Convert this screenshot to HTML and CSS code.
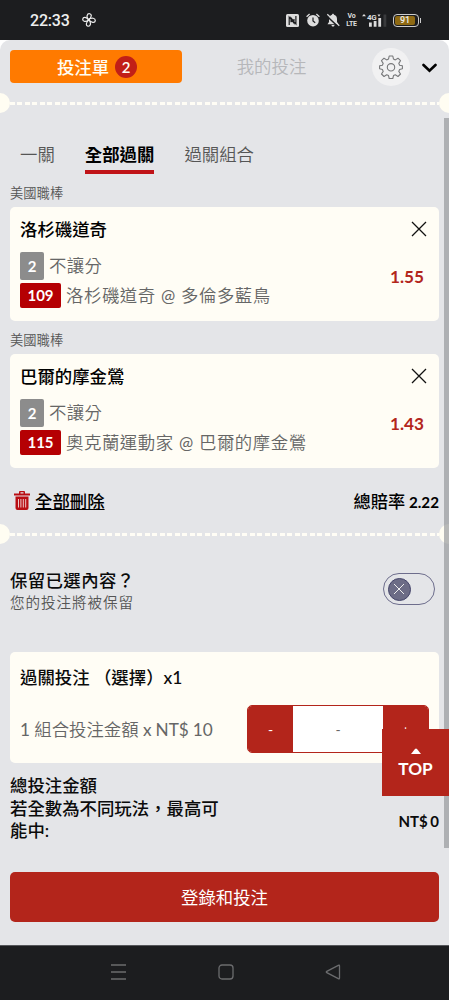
FILE: index.html
```html
<!DOCTYPE html>
<html lang="zh-Hant">
<head>
<meta charset="utf-8">
<title>投注單</title>
<link rel="stylesheet" href="styles.css">
</head>
<body>
<div class="phone">
  <header class="status">
    <span class="clock">22:33</span>
    <svg class="fan" width="14" height="14" viewBox="0 0 14 14"><g fill="none" stroke="#eee" stroke-width="1.2" transform="rotate(8 7 7)"><path d="M6.6 6.8C3.4 4.4 4.2.7 6.8.7 9.2.7 9.4 4 6.6 6.8Z"/><path d="M6.6 6.8C9 3.6 13.3 4.4 13.3 7 13.3 9.4 9.6 9.6 6.6 6.8Z"/><path d="M6.8 6.8C10 9.4 9.4 13.3 6.8 13.3 4.4 13.3 4.2 9.6 6.8 6.8Z"/><path d="M6.8 6.8C4.4 10 .7 9.4.7 7 .7 4.4 4 4.2 6.8 6.8Z"/></g></svg>
    <div class="tray">
      <svg width="13" height="13" viewBox="0 0 13 13"><rect width="13" height="13" rx="1.5" fill="#ddd"/><path d="M3.2 11V3.2L8 9V5M9.9 2v7.8L5 4v4.2" fill="none" stroke="#1c1d1f" stroke-width="1.2"/></svg>
      <svg width="14" height="14" viewBox="0 0 14 14"><circle cx="7" cy="7.7" r="5.8" fill="#ddd"/><path d="M.6 3.8 3.6 1M13.4 3.8 10.4 1" stroke="#ddd" stroke-width="1.3"/><path d="M7 4.6V8l2.2 1.7" fill="none" stroke="#1c1d1f" stroke-width="1.2"/></svg>
      <svg width="14" height="14" viewBox="0 0 14 14"><path d="M6 1.8C6 .3 8 .3 8 1.8 10.5 2.4 11 4.3 11 6v3l1.5 2.2h-11L3 9V6c0-1.700.8-3.600 3-4.200ZM5.500 12h3c0 2-3 2-3 0Z" fill="#ddd"/><path d="M.4 2.600 12 13.600" stroke="#1c1d1f" stroke-width="1.500"/><path d="M1.300 1.300 13.300 12.700" stroke="#ddd" stroke-width="1.200"/></svg>
      <span class="volte"><span>Vo</span><span>LTE</span></span>
      <svg class="signal" width="25" height="15" viewBox="0 0 25 15"><path d="M0 3.200 2 1l2 2.200ZM15.500 1.500h3L17 3.700Z" fill="#ddd"/><text x="5" y="6.800" class="net">4G</text><path d="M7 9.500h2.800v4.300H7ZM11.700 8h2.800v5.800h-2.800ZM16.300 5h2.800v8.800h-2.800Z" fill="#ddd"/><path d="M21.500 1.500h2.800v12.300h-2.800Z" fill="#393a3c"/></svg>
      <span class="battery"><span>91</span></span>
    </div>
  </header>

  <main class="sheet">
    <nav class="top">
      <div class="slip">投注單<b>2</b></div>
      <div class="mine">我的投注</div>
      <div class="gear"><svg width="24" height="24" viewBox="0 0 24 24" fill="none" stroke="#77787a" stroke-width="1.100"><path stroke-linejoin="round" d="M10.200 1h3.600l.7 3.100 1.800.8L19 3.200l2.500 2.500-1.700 2.700.8 1.800 2.800.6v3l-2.800.7-.8 1.900 1.700 2.600-2.500 2.500-2.700-1.700-1.800.8-.7 2.900h-3.600l-.7-2.900-1.800-.8L5 21.500 2.500 19l1.700-2.600-.8-1.900L.6 13.800v-3l2.800-.6.8-1.800-1.700-2.700L5 3.200l2.700 1.700 1.800-.8Z"/><circle cx="12" cy="12.300" r="3.700"/></svg></div>
      <svg class="chev" width="15" height="10" viewBox="0 0 15 10"><path d="m1.500 2 6 5.700 6-5.700" fill="none" stroke="#000" stroke-width="2.600" stroke-linecap="round"/></svg>
    </nav>
    <div class="tear"></div>

    <div class="tabs"><span>一關</span><span class="on">全部過關</span><span>過關組合</span></div>

    <div class="league">美國職棒</div>
    <section class="card pick">
      <div class="name"><span>洛杉磯道奇</span><svg class="x" width="16" height="16" viewBox="0 0 16 16"><path d="m1 1 14 14M15 1 1 15"/></svg></div>
      <div class="body">
        <div class="lines">
          <div class="line"><i class="tag grey">2</i><span class="market">不讓分</span></div>
          <div class="line"><i class="tag red">109</i><span class="game">洛杉磯道奇 <u>@</u> 多倫多藍鳥</span></div>
        </div>
        <span class="odds">1.55</span>
      </div>
    </section>

    <div class="league">美國職棒</div>
    <section class="card pick">
      <div class="name"><span>巴爾的摩金鶯</span><svg class="x" width="16" height="16" viewBox="0 0 16 16"><path d="m1 1 14 14M15 1 1 15"/></svg></div>
      <div class="body">
        <div class="lines">
          <div class="line"><i class="tag grey">2</i><span class="market">不讓分</span></div>
          <div class="line"><i class="tag red">115</i><span class="game">奧克蘭運動家 <u>@</u> 巴爾的摩金鶯</span></div>
        </div>
        <span class="odds">1.43</span>
      </div>
    </section>

    <div class="summary">
      <svg width="16" height="19" viewBox="0 0 16 19"><path d="M0 2.500h5V1Q5 0 6 0h4q1 0 1 1v1.500h5v2H0ZM6.500 1.300v1.200h3V1.300Z" fill="#b90d12"/><path d="M1.500 5.500h13V17q0 2-2 2h-9q-2 0-2-2Z" fill="#b90d12"/><path d="M4.500 8v8.500M6.900 8v8.500M9.300 8v8.500M11.700 8v8.500" stroke="#edc8ca" stroke-width="1"/></svg>
      <a>全部刪除</a>
      <span class="total">總賠率 <b>2.22</b></span>
    </div>
    <div class="tear low"></div>

    <div class="keep">
      <div><div class="keep-title">保留已選內容？</div><div class="keep-note">您的投注將被保留</div></div>
      <div class="switch"><span><svg width="12" height="12" viewBox="0 0 12 12"><path d="m1 1 10 10M11 1 1 11" stroke="#eee" stroke-width="1"/></svg></span></div>
    </div>

    <section class="card stake">
      <div class="stake-title">過關投注 （選擇）x1</div>
      <div class="stake-row">
        <span><u>1</u> 組合投注金額 <u>x NT$ 10</u></span>
        <div class="stepper"><b>-</b><em>-</em><b>+</b></div>
      </div>
    </section>

    <div class="amount"><div>總投注金額<br>若全數為不同玩法，最高可<br>能中:</div><span>NT$ 0</span></div>
    <div class="submit">登錄和投注</div>
    <div class="scroll"></div>
    <div class="totop"><svg width="10" height="6" viewBox="0 0 10 6"><path d="m0 6 4-5q1-1 2 0l4 5Z" fill="#fff"/></svg><span>TOP</span></div>
  </main>

  <footer class="nav">
    <svg width="17" height="16" viewBox="0 0 17 16"><path d="M1 1h15M1 8h15M1 15h15"/></svg>
    <svg width="16" height="16" viewBox="0 0 16 16"><rect x="1" y="1" width="14" height="14" rx="3"/></svg>
    <svg width="16" height="16" viewBox="0 0 16 16"><path d="M14.500 2v12q0 1.300-1.200.7L1.800 8.700q-1-.7 0-1.400L13.300 1.300q1.200-.6 1.200.7Z"/></svg>
  </footer>
</div>
</body>
</html>
```

FILE: styles.css
```css
* { box-sizing: border-box; }
body { margin: 0; background: #1c1d1f; font-family: Lato, "Noto Sans CJK TC", sans-serif; color: #0b0b0b; }
.phone { width: 449px; height: 1000px; display: flex; flex-direction: column; overflow: hidden; white-space: nowrap; background: linear-gradient(#1c1d1f 40px, #fff 40px 60px, #1c1d1f 60px); }
.status { height: 40px; flex: none; display: flex; align-items: center; padding: 0 28px 0 30px; color: #eee; }
.clock { font: 500 16px/20px Roboto, sans-serif; width: 52px; letter-spacing: -.2px; padding-top: 1px; }
.tray { margin-left: auto; display: flex; align-items: center; gap: 6px; }
.tray > svg:first-child { margin-right: 1px; }
.volte { font: 700 7px/8px Roboto, sans-serif; width: 11px; display: flex; flex-direction: column; align-items: center; color: #ddd; letter-spacing: -.3px; }
.volte span { height: 8px; }
.signal { margin-left: -1px; }
.net { font: 700 8px Roboto, sans-serif; fill: #ddd; letter-spacing: -.3px; }
.battery { position: relative; width: 26px; height: 13px; border: 1px solid #ccc; border-radius: 4px; padding: 1px; margin-right: 2px; }
.battery span { display: block; width: 20px; height: 9px; background: #8f6a13; border-radius: 2px; font: 500 9px/9px Roboto, sans-serif; text-align: center; color: #eee; }
.battery::after { content: ""; position: absolute; right: -3px; top: 3px; width: 1px; height: 5px; background: #ccc; }

.sheet { position: relative; height: 906px; flex: none; background: #e4e5e8; border-radius: 10px 10px 0 0; padding: 10px 10px 0; border-bottom: 1px solid #55565a; }
.top { display: flex; align-items: center; height: 33px; }
.slip { width: 172px; height: 33px; border-radius: 4px; background: #ff7a00; color: #fffdf3; font-size: 17.400px; font-weight: 500; display: flex; align-items: center; justify-content: center; gap: 6px; padding-left: 2px; }
.slip b { width: 22px; height: 22px; border-radius: 50%; background: #c11f17; font-size: 15px; font-weight: 600; line-height: 22px; text-align: center; }
.mine { width: 179px; text-align: center; font-size: 17.400px; font-weight: 350; line-height: 26px; color: #b6b7ba; }
.gear { width: 38px; height: 38px; flex: none; border-radius: 50%; background: #f1f1f2; display: flex; align-items: center; justify-content: center; margin-left: 11px; }
.chev { margin-left: 12px; margin-top: 2px; flex: none; }

.tear { position: relative; margin: 10px -10px 0; height: 20px; background: repeating-linear-gradient(90deg, #fffdf5 0 5px, transparent 5px 7.500px) 10px 9px / 429px 3px no-repeat; overflow: hidden; }
.tear::before, .tear::after { content: ""; position: absolute; top: 0; width: 20px; height: 20px; border-radius: 50%; background: #fffdf2; }
.tear::before { left: -10px; }
.tear::after { right: -10px; }

.tabs { display: flex; gap: 30px; margin: 29px 10px 0; font-size: 17.400px; line-height: 25px; height: 32px; font-weight: 350; color: #555; }
.tabs .on { color: #000; font-weight: 600; border-bottom: 4px solid #c01318; }
.league { margin-top: 9px; height: 24px; line-height: 20px; font-size: 13.300px; font-weight: 350; color: #555; }
.card { background: #fffdf5; border-radius: 5px; }
.pick { height: 114px; padding: 9px 10px 0; }
.name { display: flex; justify-content: space-between; height: 35px; font-size: 17.400px; line-height: 27px; font-weight: 500; color: #000; }
.x { margin: 5px 2.500px 0; fill: none; stroke: #111; stroke-width: 1.300; }
.body { display: flex; justify-content: space-between; }
.line { display: flex; align-items: center; height: 29px; line-height: 26px; }
.line + .line { height: 30px; }
.line + .line .game { padding-top: 1px; }
u { text-decoration: none; font-weight: 400; }
.tag { font-style: normal; font-weight: 700; color: #fff; border-radius: 2px; text-align: center; }
.grey { width: 24px; height: 28px; line-height: 29px; font-size: 15px; background: #8c8c8c; margin-right: 5px; }
.red { width: 41px; height: 25px; line-height: 25px; font-size: 15px; background: #b50003; margin-right: 5px; }
.market { font-size: 17.400px; font-weight: 350; color: #666; letter-spacing: .4px; }
.game { font-size: 17.400px; font-weight: 350; color: #666; letter-spacing: .55px; }
.game u { font-size: 17px; }
.odds { margin: 14px 5px 0 0; font-size: 17.200px; line-height: 24px; font-weight: 700; color: #b3261c; }

.summary { display: flex; align-items: center; height: 26px; margin-top: 19px; padding-left: 4px; font-size: 17.400px; font-weight: 500; color: #000; }
.summary a { margin-left: 5px; text-decoration: underline; text-underline-offset: 1px; }
.total { margin-left: auto; font-size: 17.200px; word-spacing: -.5px; }
.total b { font-size: 15.200px; font-weight: 700; }
.tear.low { margin-top: 11px; }
.keep { display: flex; justify-content: space-between; margin-top: 24px; height: 57px; }
.keep-title { font-size: 17.400px; line-height: 26px; font-weight: 500; letter-spacing: .4px; }
.keep-note { font-size: 14.600px; line-height: 18px; font-weight: 350; letter-spacing: .9px; color: #555; }
.switch { width: 52px; height: 32px; border: 1px solid #6d6d8c; border-radius: 16px; margin: 5px 4px 0 0; padding: 3.500px; }
.switch span { width: 23px; height: 23px; border-radius: 50%; background: #6c6c86; border: 1px solid #45456b; display: flex; align-items: center; justify-content: center; }

.stake { margin-top: 27px; height: 111px; padding: 13px 10px 0; }
.stake-title { font-size: 17.400px; line-height: 26px; font-weight: 500; }
.stake-row { display: flex; justify-content: space-between; align-items: center; margin-top: 14px; font-size: 17.400px; font-weight: 350; color: #666; }
.stake-row > span { word-spacing: -.4px; line-height: 26px; padding-top: 1px; }
.stake-row u { font-size: 17.200px; }
.stepper { width: 182px; height: 48px; display: flex; border: 1px solid #b3251b; border-radius: 5px; overflow: hidden; background: #fff; line-height: 47px; text-align: center; font-weight: 400; font-size: 14px; }
.stepper b { width: 45px; background: #b3251b; color: #fff; font-weight: 400; }
.stepper em { flex: 1; font-style: normal; }
.amount { display: flex; justify-content: space-between; align-items: flex-end; margin-top: 12px; height: 68px; font-size: 17.400px; line-height: 22.700px; font-weight: 500; }
.amount span { font-size: 15px; font-weight: 700; padding-bottom: 10px; word-spacing: -1px; }
.submit { margin-top: 29px; height: 50px; line-height: 51px; border-radius: 5px; background: #b3251b; color: #fff; text-align: center; font-size: 17.400px; }
.scroll { position: absolute; right: 0; top: 78px; width: 5px; height: 730px; background: rgba(145,148,151,.65); }
.totop { position: absolute; right: 0; top: 689px; width: 67px; height: 67px; background: #b3251b; color: #fff; display: flex; flex-direction: column; align-items: center; padding-top: 19px; font-size: 17.200px; line-height: 30px; font-weight: 700; }
.nav { flex: 1; display: flex; align-items: center; padding: 0 108px 2px 110px; justify-content: space-between; }
.nav svg { fill: none; stroke: #6b6c6e; stroke-width: 1.300; }
```
